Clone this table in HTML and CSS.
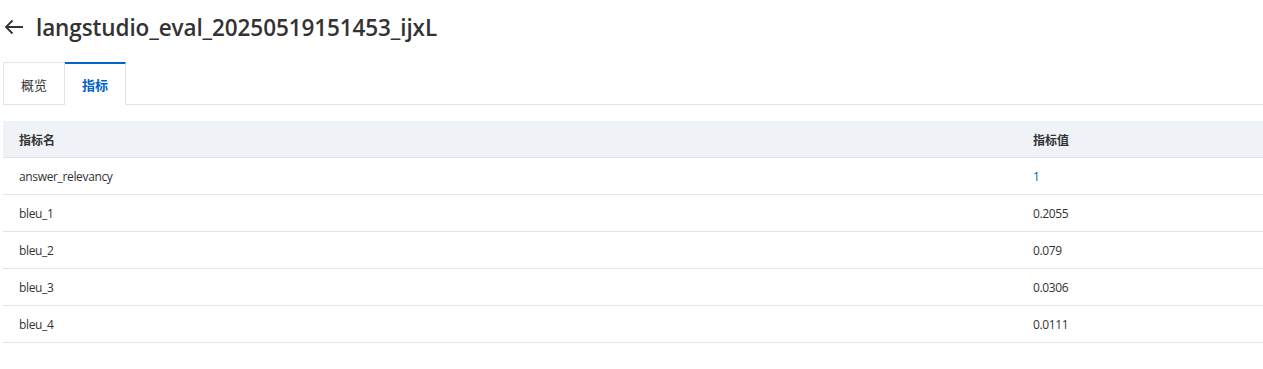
FILE: index.html
```html
<!DOCTYPE html>
<html lang="zh">
<head>
<meta charset="utf-8">
<link rel="stylesheet" href="styles.css">
</head>
<body>
<div class="page">
  <div class="header">
    <svg class="back" width="20" height="16" viewBox="0 0 20 16"><path d="M19 8H2M8.5 1.5L2 8l6.5 6.5" fill="none" stroke="#333" stroke-width="1.8"/></svg>
    <h1 class="title">langstudio_eval_20250519151453_ijxL</h1>
  </div>
  <div class="tabs">
    <div class="tab">概览</div>
    <div class="tab active">指标</div>
    <div class="tab-rest"></div>
  </div>
  <table class="metrics">
    <thead>
      <tr><th class="c-name">指标名</th><th class="c-val">指标值</th></tr>
    </thead>
    <tbody>
      <tr><td>answer_relevancy</td><td class="link">1</td></tr>
      <tr><td>bleu_1</td><td>0.2055</td></tr>
      <tr><td>bleu_2</td><td>0.079</td></tr>
      <tr><td>bleu_3</td><td>0.0306</td></tr>
      <tr><td>bleu_4</td><td>0.0111</td></tr>
    </tbody>
  </table>
</div>
</body>
</html>
```

FILE: styles.css
```css
html, body { margin: 0; padding: 0; background: #fff; }
body { font-family: "Open Sans", "Noto Sans CJK SC", sans-serif; color: #333; }
.page { padding: 0 0 0 3px; }
.header { display: flex; align-items: center; height: 54px; gap: 12px; }
.back { display: block; margin-left: 1px; }
.title { margin: 0; font-size: 22.5px; font-weight: 600; color: #333; letter-spacing: -0.1px; }
.tabs { display: flex; margin-top: 8px; height: 43px; }
.tab { width: 62px; box-sizing: border-box; border: 1px solid #e3e3e3; display: flex; align-items: center; justify-content: center; font-size: 13px; font-family: "Noto Sans CJK SC", sans-serif; color: #333; padding-top: 1px; }
.tab + .tab { border-left: none; }
.tab.active { border-top: 2px solid #0064c8; border-bottom-color: #fff; color: #0064c8; font-weight: 600; width: 61px; padding-top: 0; }
.tab-rest { flex: 1; border-bottom: 1px solid #e3e3e3; }
.metrics { margin-top: 16px; width: 100%; border-collapse: collapse; font-size: 12px; }
.metrics th, .metrics td { text-align: left; padding: 0 16px; height: 36px; border-bottom: 1px solid #e3e3e3; }
.metrics th { background: #eff2f6; font-weight: 600; font-family: "Noto Sans CJK SC", sans-serif; color: #333; }
.metrics td { color: #333; letter-spacing: -0.35px; }
.c-val { width: 214px; }
.metrics td.link { color: #0064c8; }
```
